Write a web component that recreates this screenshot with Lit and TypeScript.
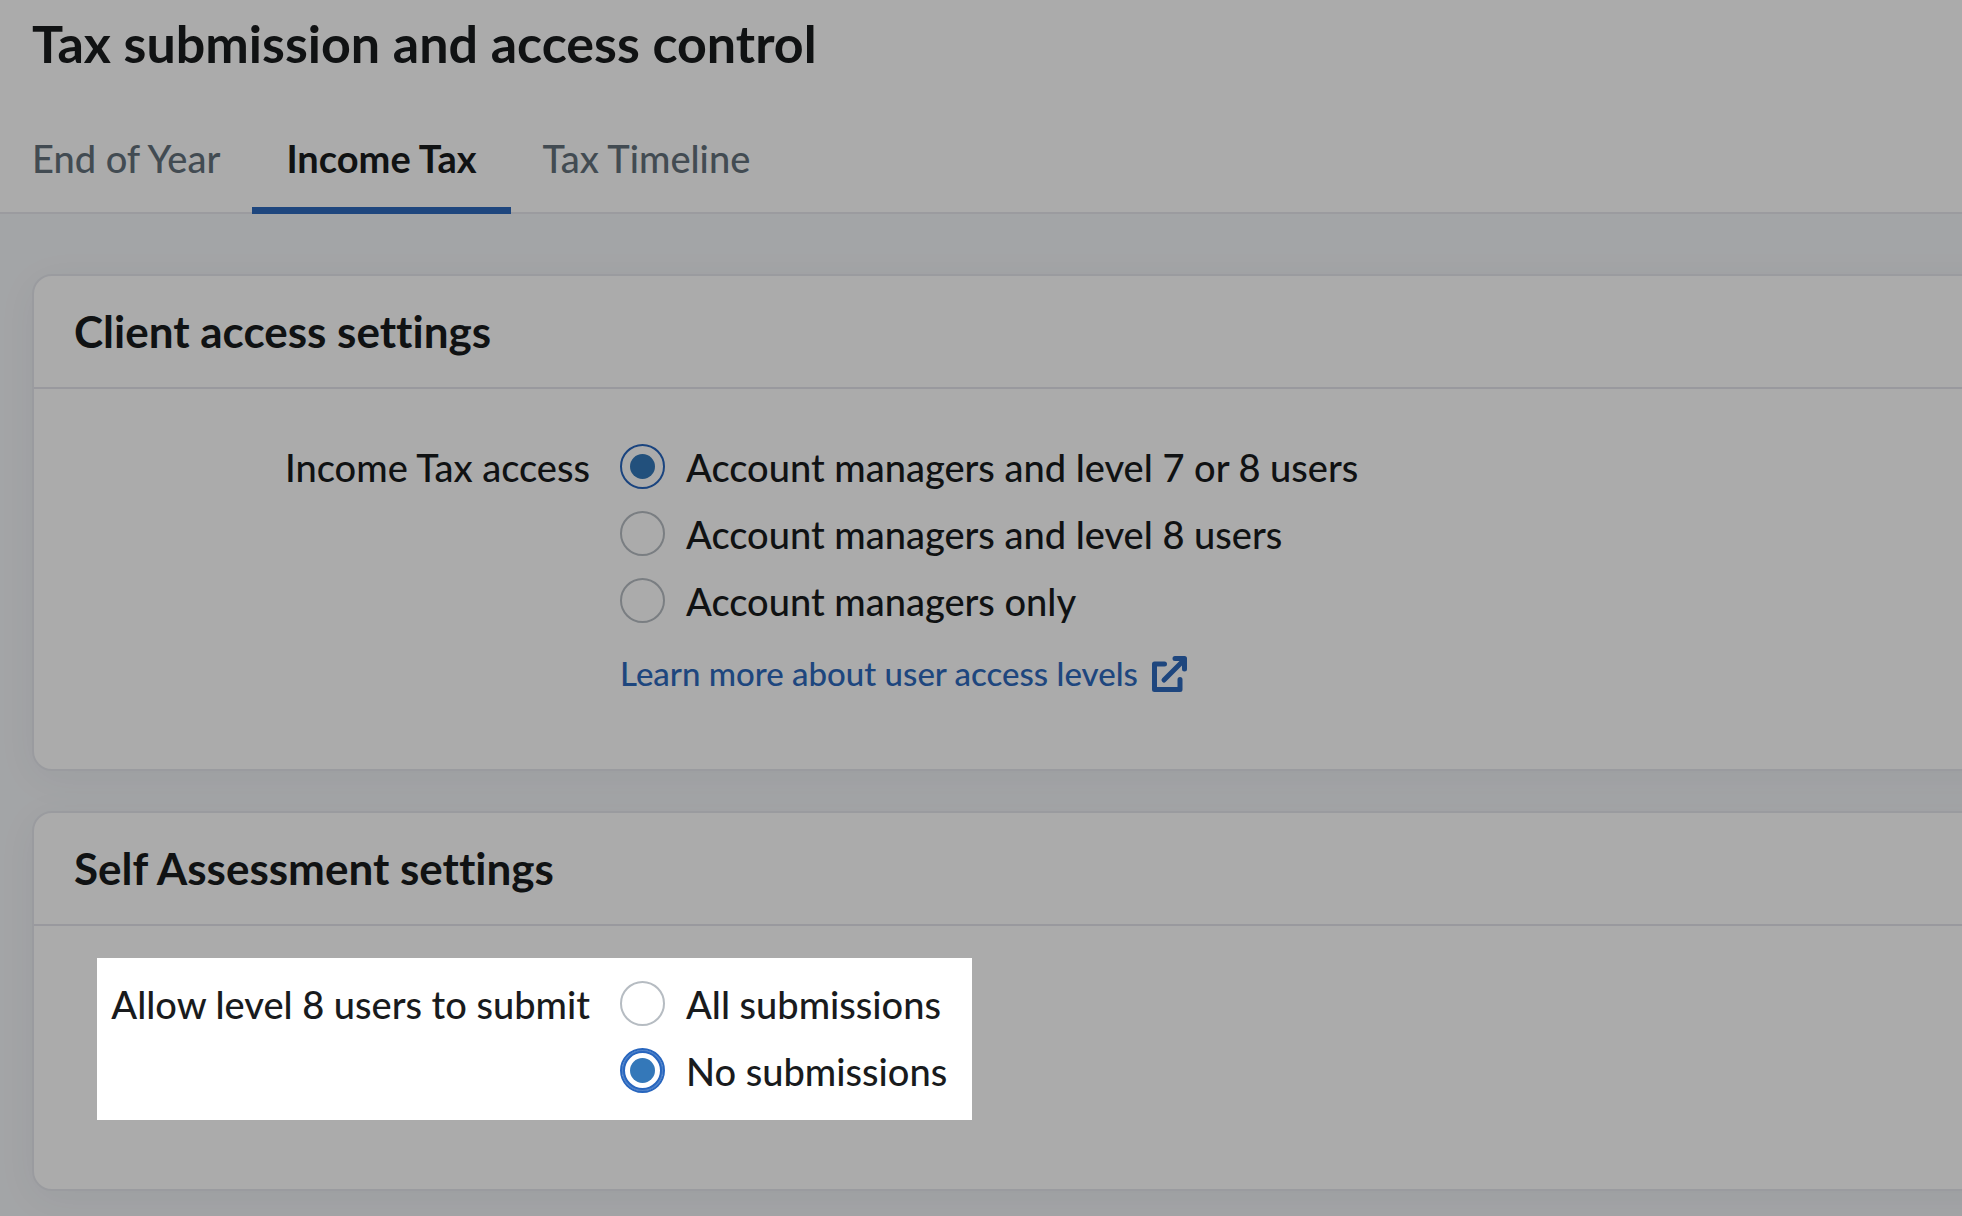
import { LitElement, html, css } from "lit";
import { customElement, property, state } from "lit/decorators.js";
import { classMap } from "lit/directives/class-map.js";

@customElement("radio-group")
class RadioGroup extends LitElement {
  @property() name = "";
  @property() legend = "";
  @property({ attribute: false }) options: string[] = [];
  @property({ type: Number }) selected = 0;
  @property({ type: Boolean }) spotlight = false;

  static styles = css`
    :host {
      display: block;
    }
    .group {
      display: grid;
      grid-template-columns: 493px auto;
      column-gap: 30px;
      width: fit-content;
      padding-top: 23px;
    }
    /* The oversized shadow dims everything outside the highlighted group. */
    .spotlight {
      position: relative;
      z-index: 1;
      padding: 23px 25px 27px 0;
      box-shadow: 0 0 0 9999px rgba(0, 0, 0, 0.33);
    }
    .legend,
    .text {
      padding-top: 2px;
      line-height: 43px;
    }
    .legend {
      text-align: right;
    }
    .options {
      display: grid;
      row-gap: 22px;
      justify-items: start;
    }
    .option {
      display: flex;
      align-items: center;
      gap: 21px;
    }
    .radio {
      appearance: none;
      display: grid;
      place-content: center;
      box-sizing: border-box;
      flex: none;
      width: 45px;
      height: 45px;
      margin: 0;
      border: 2px solid #b6bcc2;
      border-radius: 50%;
      background: #fff;
      outline: none;
    }
    .radio:checked {
      border-color: #2866be;
    }
    .radio:checked::before {
      content: "";
      width: 25px;
      height: 25px;
      border-radius: 50%;
      background: #3478b9;
    }
    .spotlight .radio:checked {
      box-shadow: inset 0 0 0 1px #5285cb, inset 0 0 0 3px #2866be;
    }
  `;

  render() {
    return html`
      <div
        class=${classMap({ group: true, spotlight: this.spotlight })}
        role="radiogroup"
        aria-labelledby="legend"
      >
        <div class="legend" id="legend">${this.legend}</div>
        <div class="options">
          ${this.options.map(
            (text, i) => html`
              <label class="option">
                <input
                  class="radio"
                  type="radio"
                  name=${this.name}
                  .checked=${i === this.selected}
                  @change=${() => (this.selected = i)}
                />
                <span class="text">${text}</span>
              </label>
            `
          )}
          <slot></slot>
        </div>
      </div>
    `;
  }
}

@customElement("settings-card")
class SettingsCard extends LitElement {
  @property() heading = "";

  static styles = css`
    :host {
      display: block;
    }
    .card {
      border: 2px solid #e6e8ee;
      border-radius: 20px;
      background: #fff;
      box-shadow: 0 8px 40px rgba(20, 35, 50, 0.05);
    }
    .heading {
      margin: 0;
      padding: 29px 40px 30px;
      border-bottom: 2px solid #e4e5ec;
      font-size: 44px;
      line-height: 52px;
      font-weight: 700;
    }
    .body {
      padding: 32px 0 69px 63px;
    }
  `;

  render() {
    return html`
      <section class="card">
        <h2 class="heading">${this.heading}</h2>
        <div class="body"><slot></slot></div>
      </section>
    `;
  }
}

@customElement("app-root")
class AppRoot extends LitElement {
  @state() private tab = 1;
  private tabs = ["End of Year", "Income Tax", "Tax Timeline"];

  static styles = css`
    :host {
      display: block;
      box-sizing: border-box;
      min-height: 100vh;
      overflow: hidden;
      background: #f4f6f9;
      color: #191b1d;
      font-family: Lato, "Liberation Sans", sans-serif;
      font-size: 38px;
      font-weight: 500;
      font-variant-ligatures: none;
    }
    .header {
      padding-top: 13px;
      border-bottom: 2px solid #e7e8ee;
      background: #fff;
    }
    .title {
      margin: 0 32px;
      font-size: 52px;
      line-height: 60px;
      font-weight: 700;
    }
    .tabs {
      display: flex;
      margin: 36px 0 -2px;
    }
    .tab {
      padding: 0 32px;
      border: none;
      border-bottom: 7px solid transparent;
      background: none;
      color: #63717b;
      font: inherit;
      line-height: 98px;
      cursor: pointer;
    }
    .tab.active {
      padding: 0 34px;
      border-bottom-color: #2e69bc;
      color: #191b1d;
      font-weight: 700;
    }
    .main {
      display: grid;
      gap: 40px;
      margin-right: -48px;
      padding: 60px 0 24px 32px;
    }
    .link {
      display: inline-flex;
      align-items: center;
      gap: 14px;
      padding-top: 2px;
      color: #2e69bc;
      font-size: 33px;
      line-height: 53px;
      text-decoration: none;
    }
    .icon {
      width: 36px;
      height: 36px;
      fill: none;
      stroke: currentColor;
      stroke-width: 5;
      stroke-linecap: round;
      stroke-linejoin: round;
    }
  `;

  render() {
    return html`
      <header class="header">
        <h1 class="title">Tax submission and access control</h1>
        <nav class="tabs" role="tablist">
          ${this.tabs.map(
            (name, i) => html`
              <button
                class=${classMap({ tab: true, active: i === this.tab })}
                role="tab"
                aria-selected=${i === this.tab ? "true" : "false"}
                @click=${() => (this.tab = i)}
              >${name}</button>
            `
          )}
        </nav>
      </header>
      <main class="main">
        <settings-card heading="Client access settings">
          <radio-group
            name="income-tax-access"
            legend="Income Tax access"
            .options=${[
              "Account managers and level 7 or 8 users",
              "Account managers and level 8 users",
              "Account managers only",
            ]}
            .selected=${0}
          >
            <a class="link" href="#access-levels">
              Learn more about user access levels
              <svg class="icon" viewBox="0 0 36 36" aria-hidden="true">
                <path d="M12.5 8H2.5V33.5H28V23.5" />
                <path d="M12 24L32 4" />
                <path d="M23 2.5H32.5V13" />
              </svg>
            </a>
          </radio-group>
        </settings-card>
        <settings-card heading="Self Assessment settings">
          <radio-group
            name="self-assessment-submit"
            legend="Allow level 8 users to submit"
            .options=${["All submissions", "No submissions"]}
            .selected=${1}
            spotlight
          ></radio-group>
        </settings-card>
      </main>
    `;
  }
}
